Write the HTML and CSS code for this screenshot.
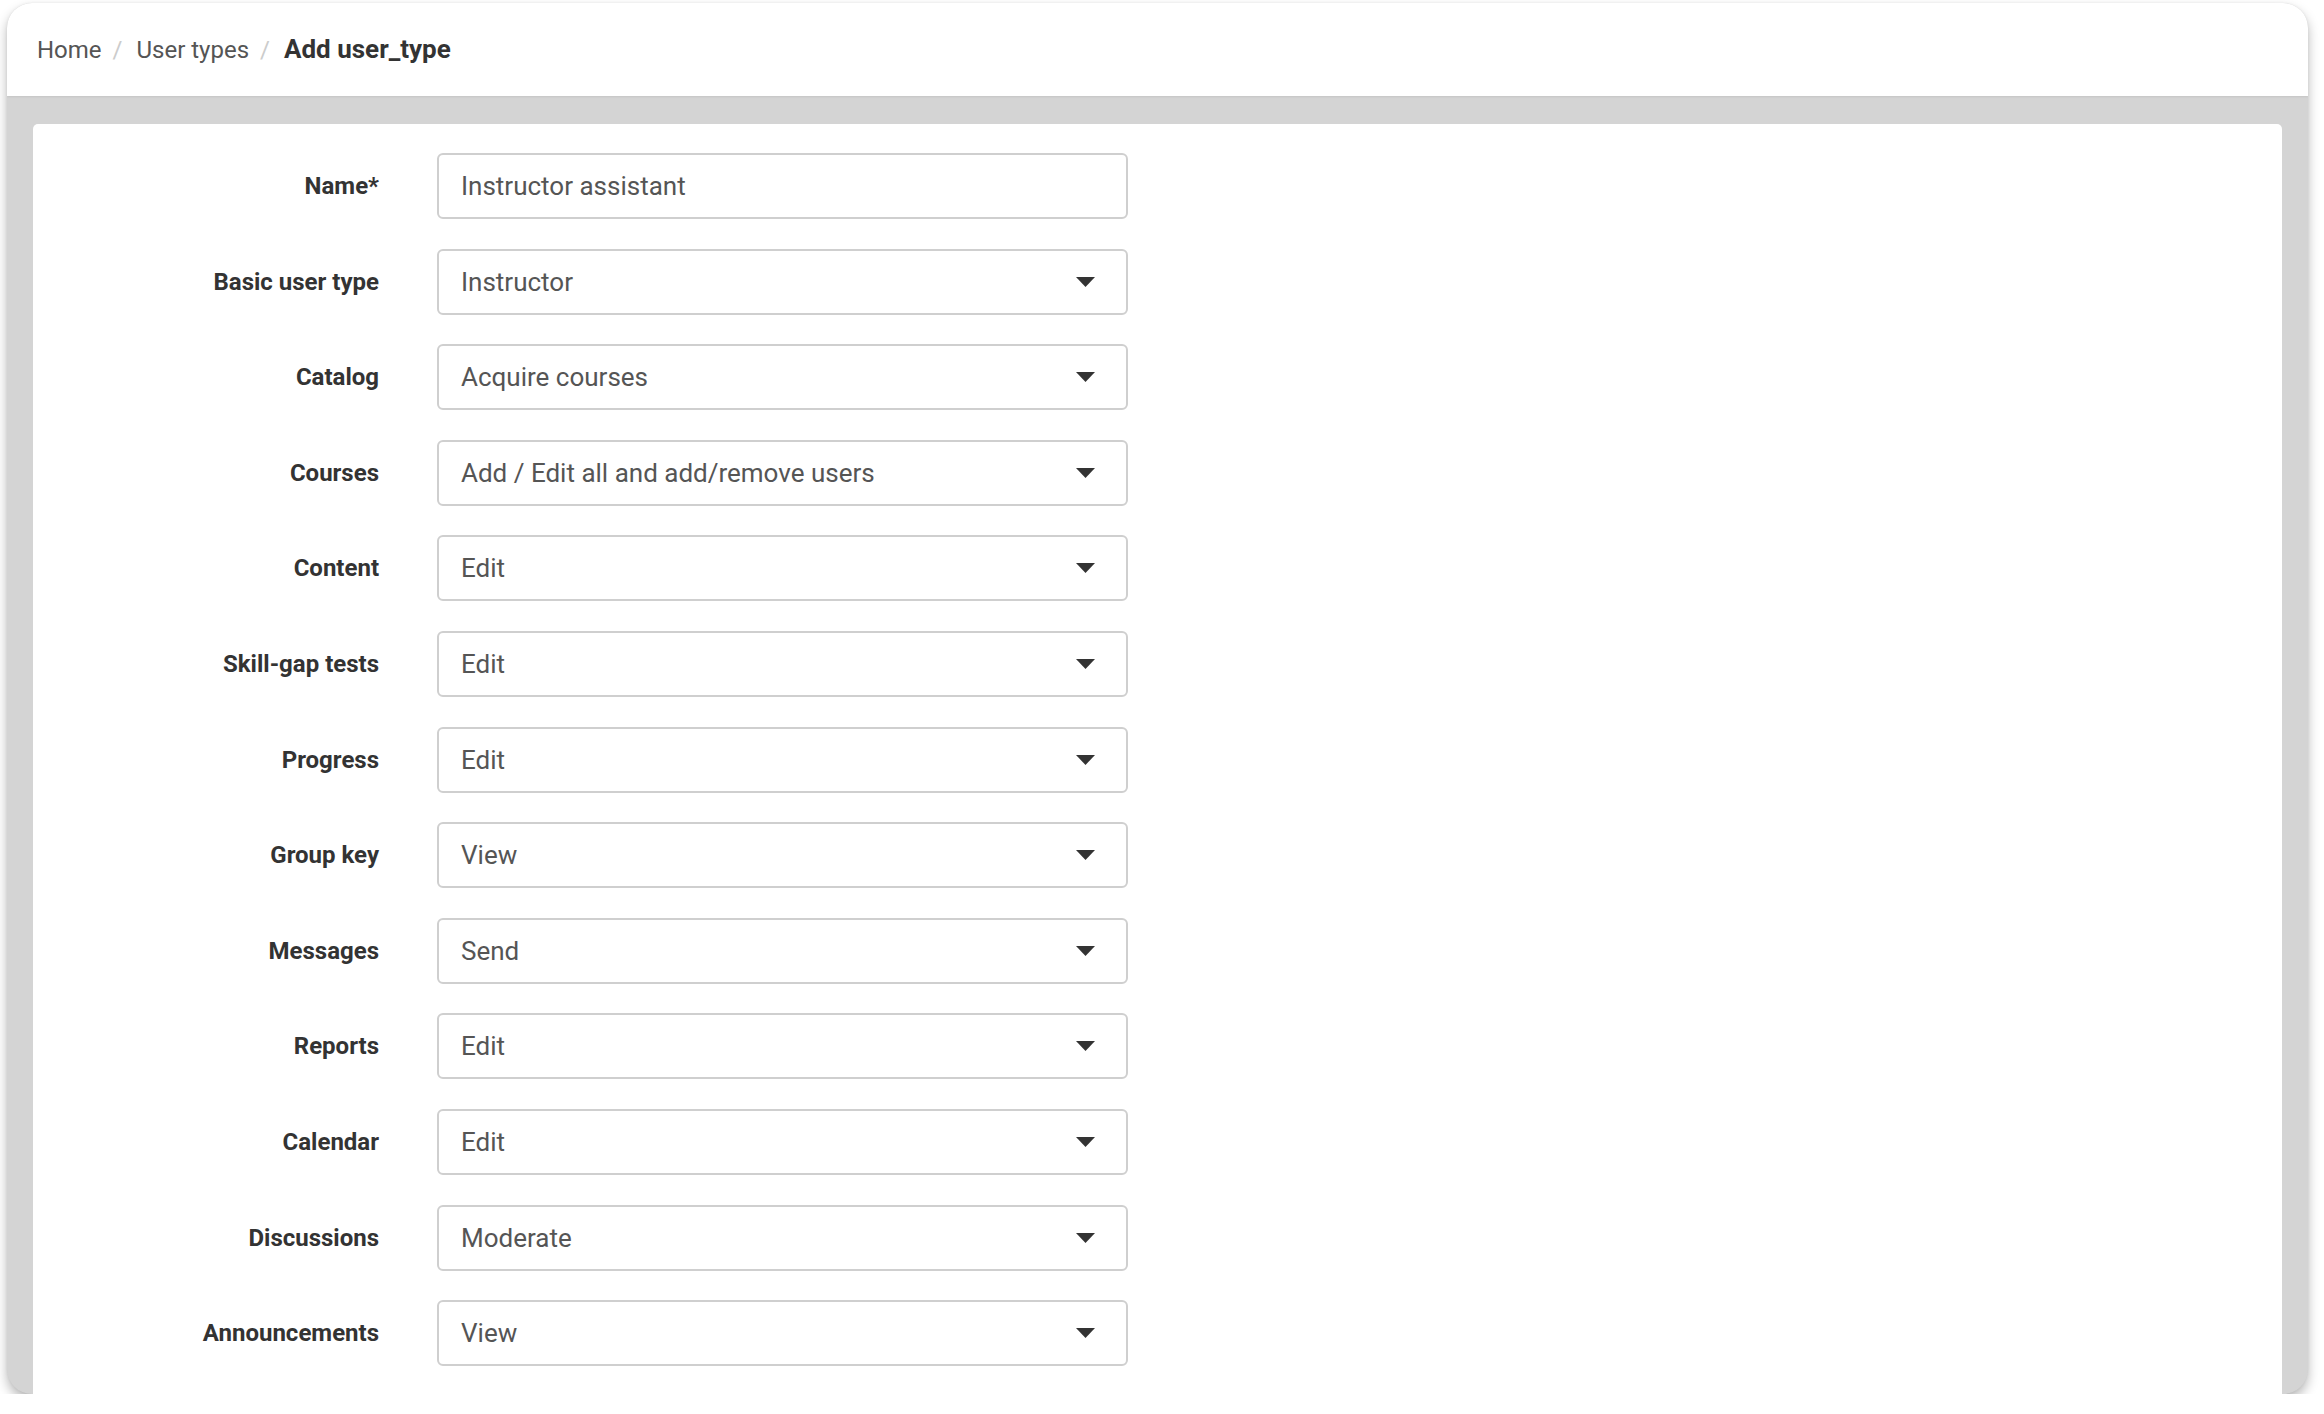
FILE: index.html
```html
<!DOCTYPE html>
<html lang="en">
<head>
    <meta charset="UTF-8">
    <meta name="viewport" content="width=device-width, initial-scale=1.0">
    <title>Add user_type</title>
    <link rel="stylesheet" href="styles.css">
</head>
<body>
    <div class="window">
        <div class="topbar">
            <ul class="breadcrumb">
                <li><a href="#">Home</a></li>
                <li><a href="#">User types</a></li>
                <li class="active">Add user_type</li>
            </ul>
        </div>
        <div class="frame">
            <form class="card">
                <label class="label" for="name">Name*</label>
                <input class="field" type="text" id="name" value="Instructor assistant">

                <label class="label">Basic user type</label>
                <div class="select-wrap">
                    <select class="field"><option>Instructor</option><option>Learner</option><option>Administrator</option></select>
                    <svg class="caret" viewBox="0 0 19 10"><path d="M0 0H19L9.5 10Z"/></svg>
                </div>

                <label class="label">Catalog</label>
                <div class="select-wrap">
                    <select class="field"><option>Acquire courses</option><option>View</option></select>
                    <svg class="caret" viewBox="0 0 19 10"><path d="M0 0H19L9.5 10Z"/></svg>
                </div>

                <label class="label">Courses</label>
                <div class="select-wrap">
                    <select class="field"><option>Add / Edit all and add/remove users</option><option>View</option></select>
                    <svg class="caret" viewBox="0 0 19 10"><path d="M0 0H19L9.5 10Z"/></svg>
                </div>

                <label class="label">Content</label>
                <div class="select-wrap">
                    <select class="field"><option>Edit</option><option>View</option></select>
                    <svg class="caret" viewBox="0 0 19 10"><path d="M0 0H19L9.5 10Z"/></svg>
                </div>

                <label class="label">Skill-gap tests</label>
                <div class="select-wrap">
                    <select class="field"><option>Edit</option><option>View</option></select>
                    <svg class="caret" viewBox="0 0 19 10"><path d="M0 0H19L9.5 10Z"/></svg>
                </div>

                <label class="label">Progress</label>
                <div class="select-wrap">
                    <select class="field"><option>Edit</option><option>View</option></select>
                    <svg class="caret" viewBox="0 0 19 10"><path d="M0 0H19L9.5 10Z"/></svg>
                </div>

                <label class="label">Group key</label>
                <div class="select-wrap">
                    <select class="field"><option>View</option><option>Edit</option></select>
                    <svg class="caret" viewBox="0 0 19 10"><path d="M0 0H19L9.5 10Z"/></svg>
                </div>

                <label class="label">Messages</label>
                <div class="select-wrap">
                    <select class="field"><option>Send</option><option>Hide</option></select>
                    <svg class="caret" viewBox="0 0 19 10"><path d="M0 0H19L9.5 10Z"/></svg>
                </div>

                <label class="label">Reports</label>
                <div class="select-wrap">
                    <select class="field"><option>Edit</option><option>View</option></select>
                    <svg class="caret" viewBox="0 0 19 10"><path d="M0 0H19L9.5 10Z"/></svg>
                </div>

                <label class="label">Calendar</label>
                <div class="select-wrap">
                    <select class="field"><option>Edit</option><option>View</option></select>
                    <svg class="caret" viewBox="0 0 19 10"><path d="M0 0H19L9.5 10Z"/></svg>
                </div>

                <label class="label">Discussions</label>
                <div class="select-wrap">
                    <select class="field"><option>Moderate</option><option>View</option></select>
                    <svg class="caret" viewBox="0 0 19 10"><path d="M0 0H19L9.5 10Z"/></svg>
                </div>

                <label class="label">Announcements</label>
                <div class="select-wrap">
                    <select class="field"><option>View</option><option>Edit</option></select>
                    <svg class="caret" viewBox="0 0 19 10"><path d="M0 0H19L9.5 10Z"/></svg>
                </div>
            </form>
        </div>
    </div>
</body>
</html>
```

FILE: styles.css
```css
body { margin: 0; background: #fff; font-family: Roboto, "Liberation Sans", Arial, sans-serif; }
.window { margin: 3px 16px 0 7px; height: 1391px; border-radius: 25px; overflow: hidden; display: flex; flex-direction: column; background: #d4d4d4; box-shadow: 0 6px 12px rgba(0, 0, 0, 0.28), 0 0 3px rgba(0, 0, 0, 0.06); }
.topbar { height: 93px; flex: none; background: #fff; box-shadow: 0 1px 2px rgba(0, 0, 0, 0.08); position: relative; }
.breadcrumb { list-style: none; margin: 0; padding: 0 0 0 30px; display: flex; height: 61px; align-items: flex-end; font-size: 24px; line-height: 28px; }
.breadcrumb li { color: #555; }
.breadcrumb li + li::before { content: "/"; color: #ccc; font-size: 24px; font-weight: normal; padding: 0 14px 0 11px; }
.breadcrumb a { color: #555; text-decoration: none; }
.breadcrumb .active { color: #333; font-weight: bold; font-size: 26px; }
.frame { flex: 1; padding: 28px 26px 0 26px; }
.card { height: 100%; box-sizing: border-box; background: #fff; border-radius: 5px 5px 0 0; padding: 29px 0 0 0; display: grid; grid-template-columns: 346px 691px; column-gap: 58px; row-gap: 29.6px; align-content: start; align-items: center; }
.label { text-align: right; font-weight: bold; font-size: 24px; color: #333; }
.field { width: 691px; height: 66px; box-sizing: border-box; border: 2px solid #cfcfcf; border-radius: 6px; padding: 0 60px 0 22px; font-family: inherit; font-size: 26px; color: #555; background: #fff; outline: none; }
select.field { appearance: none; -webkit-appearance: none; }
.select-wrap { position: relative; width: 691px; }
.caret { position: absolute; right: 33px; top: 28px; width: 19px; height: 10px; fill: #333; pointer-events: none; }
```
